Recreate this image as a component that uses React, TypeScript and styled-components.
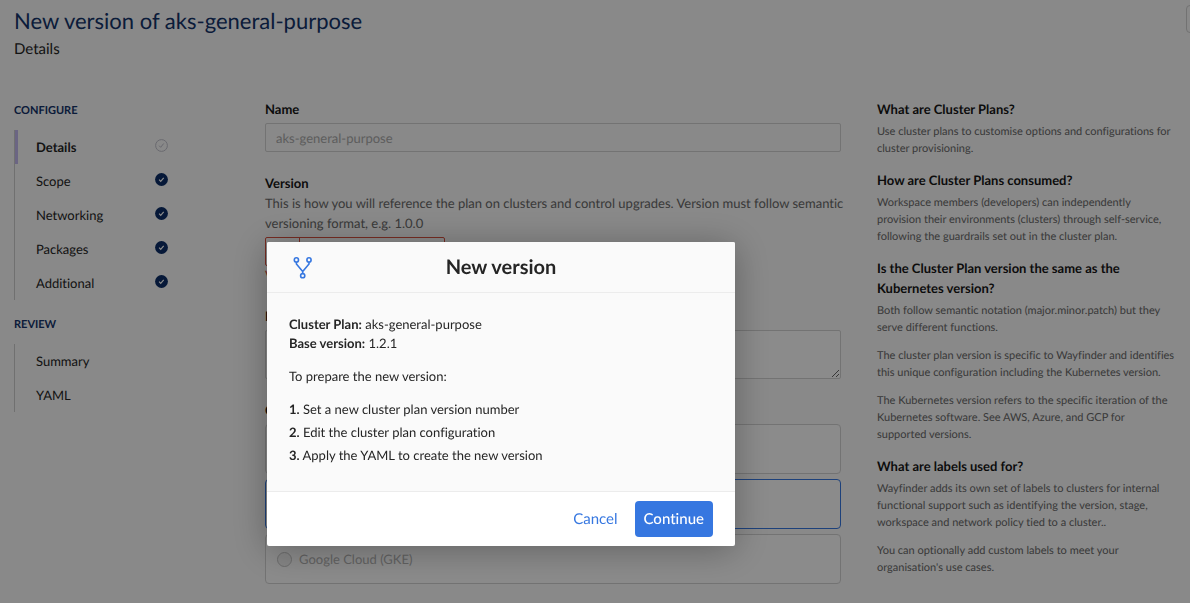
import React from "react";
import styled, { createGlobalStyle, css } from "styled-components";

const GlobalStyle = createGlobalStyle`
  *, *::before, *::after { box-sizing: border-box; }
  body {
    margin: 0;
    background: #f9f9f9;
    color: #252525;
    font-family: Lato, "Open Sans", sans-serif;
    font-size: 13px;
    line-height: 20px;
    text-rendering: geometricPrecision;
    font-variant-ligatures: none;
  }
  h1, h2, h3, p, ul, ol, fieldset { margin: 0; padding: 0; border: 0; }
  ul, ol { list-style: none; }
  button, input, textarea { font: inherit; text-rendering: inherit; }
`;

const Page = styled.div`
  min-height: 100vh;
  padding: 5px 25px 19px 14px;
  overflow: hidden;
`;

const Header = styled.header`
  display: flex;
  align-items: flex-start;
  justify-content: space-between;
  height: 94px;
`;

const Title = styled.h1`
  margin-bottom: 1px;
  color: #14346a;
  font-size: 22px;
  font-weight: 400;
  line-height: 32px;
`;

const Subtitle = styled.p`
  font-size: 15px;
  line-height: 22px;
`;

const HeaderAction = styled.button`
  flex: none;
  width: 40px;
  height: 28px;
  margin-right: -61px;
  border: 1px solid #cfcfcf;
  border-radius: 4px;
  background: transparent;
`;

const Columns = styled.div`
  display: grid;
  grid-template-columns: 215px minmax(0, 2fr) minmax(0, 1fr);
  gap: 36px;
  align-items: start;
`;

const Nav = styled.nav`
  display: flex;
  flex-direction: column;
`;

const NavHeading = styled.h2`
  padding: 2px 0 9px;
  color: #14346a;
  font-size: 11px;
  font-weight: 700;
  line-height: 20px;
`;

const NavList = styled.ul`
  margin-bottom: 13px;
  border-left: 1px solid #cdcdcd;
`;

const NavLink = styled.a<{ $active?: boolean }>`
  display: flex;
  align-items: center;
  justify-content: space-between;
  width: 153px;
  height: 34px;
  padding-left: 18px;
  border-left: 3px solid ${(p) => (p.$active ? "#c4b9ee" : "transparent")};
  color: #252525;
  font-weight: ${(p) => (p.$active ? 700 : 400)};
  text-decoration: none;

  svg {
    margin-bottom: 4px;
  }
`;

const Form = styled.form`
  display: flex;
  flex-direction: column;
`;

const Field = styled.div`
  display: flex;
  flex-direction: column;
  align-items: flex-start;
  margin-bottom: 21px;
`;

const labelText = css`
  color: #161616;
  font-size: 13px;
  font-weight: 700;
  line-height: 20px;
`;

const Label = styled.label`
  ${labelText}
`;

const FieldHelp = styled.p`
  margin-right: -12px;
  color: #686868;
`;

const controlBox = css`
  width: 100%;
  border: 1px solid #d2d2d2;
  border-radius: 2px;
  background: transparent;
  outline: none;
`;

const TextInput = styled.input`
  ${controlBox}
  height: 29px;
  margin-top: 4px;
  padding: 0 10px;
  color: #aaaaaa;
`;

const VersionGroup = styled.div`
  display: flex;
  width: 180px;
  height: 29px;
  margin-top: 4px;
  border: 1px solid #d8503f;
  border-radius: 2px;
`;

const VersionPrefix = styled.span`
  width: 34px;
  border-right: 1px solid #d8503f;
`;

const VersionInput = styled.input`
  flex: 1;
  min-width: 0;
  padding: 0 10px;
  border: 0;
  background: transparent;
  outline: none;
`;

const FieldError = styled.p`
  color: #d8503f;
  line-height: 19px;
`;

const TextArea = styled.textarea`
  ${controlBox}
  display: block;
  height: 49px;
  margin-top: 4px;
  background: #fdfdfd;
`;

const CloudGroup = styled.fieldset`
  display: flex;
  flex-direction: column;
  gap: 5px;
`;

const Legend = styled.legend`
  ${labelText}
  padding: 0 0 4px;
`;

const CloudOption = styled.label<{ $selected?: boolean }>`
  display: flex;
  align-items: center;
  gap: 7px;
  height: 50px;
  padding: 0 11px;
  border: 1px solid ${(p) => (p.$selected ? "#3677e0" : "#d2d2d2")};
  border-radius: 4px;
  background: #fdfdfd;
  color: #b2b2b2;
`;

const Radio = styled.input`
  appearance: none;
  width: 15px;
  height: 15px;
  margin: 0;
  border: 1px solid #c3c3c3;
  border-radius: 50%;
  background: #f2f2f2;
`;

const Help = styled.aside`
  display: flex;
  flex-direction: column;
  margin-right: -14px;
`;

const HelpSection = styled.section`
  display: flex;
  flex-direction: column;
  gap: 11px;
  margin-bottom: 13px;
`;

const HelpHeading = styled.h3`
  ${labelText}
  margin-bottom: -7px;
`;

const HelpText = styled.p`
  color: #686868;
  font-size: 11px;
  line-height: 17px;
`;

const Overlay = styled.div`
  position: fixed;
  inset: 0;
  padding: 242px 0 0 267px;
  background: rgba(0, 0, 0, 0.45);
`;

const Dialog = styled.div`
  width: 468px;
  overflow: visible;
  border-radius: 2px;
  background: #ffffff;
  box-shadow: 0 4px 36px rgba(0, 0, 0, 0.3);
`;

const DialogHeader = styled.header`
  display: grid;
  grid-template-columns: 24px 1fr 24px;
  align-items: center;
  height: 51px;
  padding: 0 24px;
  border-bottom: 1px solid #ececec;
  border-radius: 2px 2px 0 0;
  background: #fafafa;
`;

const DialogTitle = styled.h2`
  font-size: 20px;
  font-weight: 700;
  line-height: 28px;
  text-align: center;
`;

const DialogBody = styled.div`
  display: flex;
  flex-direction: column;
  gap: 14px;
  padding: 22px 22px 26px;
  border-bottom: 1px solid #ececec;
  background: #fafafa;
  line-height: 19px;
`;

const Steps = styled.ol`
  display: flex;
  flex-direction: column;
  gap: 4px;
`;

const DialogFooter = styled.footer`
  display: flex;
  justify-content: flex-end;
  gap: 8px;
  padding: 9px 22px;
`;

const DialogButton = styled.button<{ $primary?: boolean }>`
  height: 36px;
  padding: 0 9px;
  border: 0;
  border-radius: 4px;
  background: ${(p) => (p.$primary ? "#3677e0" : "transparent")};
  color: ${(p) => (p.$primary ? "#ffffff" : "#3677e0")};
  font-size: 15px;
  font-weight: ${(p) => (p.$primary ? 500 : 400)};
`;

function DoneIcon() {
  return (
    <svg width="13" height="13" viewBox="0 0 13 13" aria-hidden="true">
      <circle cx="6.5" cy="6.5" r="6.4" fill="#0b2d66" />
      <path d="M4.1 6.7l1.6 1.6 3-3.4" fill="none" stroke="#fff" strokeWidth="1.2" />
    </svg>
  );
}

function PendingIcon() {
  return (
    <svg width="13" height="13" viewBox="0 0 13 13" aria-hidden="true">
      <circle cx="6.5" cy="6.5" r="5.9" fill="none" stroke="#c0c0cb" />
      <path d="M4.1 6.7l1.6 1.6 3-3.8" fill="none" stroke="#c0c0cb" />
    </svg>
  );
}

function ForkIcon() {
  return (
    <svg width="24" height="24" viewBox="0 0 24 24" fill="none" stroke="#3677e0" strokeWidth="1.6" aria-hidden="true">
      <circle cx="5.4" cy="4.9" r="2.1" />
      <circle cx="18" cy="4.9" r="2.1" />
      <circle cx="11.7" cy="20.7" r="2.1" />
      <path d="M5.4 7v2l6.3 7.4L18 9V7M11.7 16.2v2.4" />
    </svg>
  );
}

type NavEntry = { name: string; state?: "pending" | "done"; active?: boolean };

const configure: NavEntry[] = [
  { name: "Details", state: "pending", active: true },
  { name: "Scope", state: "done" },
  { name: "Networking", state: "done" },
  { name: "Packages", state: "done" },
  { name: "Additional", state: "done" },
];

const review: NavEntry[] = [{ name: "Summary" }, { name: "YAML" }];

const helpTopics = [
  {
    title: "What are Cluster Plans?",
    text: ["Use cluster plans to customise options and configurations for cluster provisioning."],
  },
  {
    title: "How are Cluster Plans consumed?",
    text: [
      "Workspace members (developers) can independently provision\u00a0their environments (clusters) through self-service, following\u00a0the guardrails set out in the cluster plan.",
    ],
  },
  {
    title: "Is the Cluster Plan version the same as the Kubernetes version?",
    text: [
      "Both follow semantic notation (major.minor.patch) but they serve different functions.",
      "The cluster plan version is specific to Wayfinder and identifies this unique configuration including the Kubernetes version.",
      "The Kubernetes version refers to the specific iteration of the Kubernetes software. See AWS, Azure, and GCP for supported\u00a0versions.",
    ],
  },
  {
    title: "What are labels used for?",
    text: [
      "Wayfinder adds its own set of labels to clusters for internal functional support such as identifying the version, stage, workspace and network policy tied to a cluster..",
      "You can optionally add custom labels to meet your organisation's use cases.",
    ],
  },
];

function NavGroup({ title, entries }: { title: string; entries: NavEntry[] }) {
  return (
    <>
      <NavHeading>{title}</NavHeading>
      <NavList>
        {entries.map((entry) => (
          <li key={entry.name}>
            <NavLink href="#" $active={entry.active} aria-current={entry.active ? "step" : undefined}>
              {entry.name}
              {entry.state === "done" && <DoneIcon />}
              {entry.state === "pending" && <PendingIcon />}
            </NavLink>
          </li>
        ))}
      </NavList>
    </>
  );
}

export default function App() {
  return (
    <>
      <GlobalStyle />
      <Page>
        <Header>
          <div>
            <Title>New version of aks-general-purpose</Title>
            <Subtitle>Details</Subtitle>
          </div>
          <HeaderAction type="button" aria-label="More actions" />
        </Header>
        <Columns>
          <Nav>
            <NavGroup title="CONFIGURE" entries={configure} />
            <NavGroup title="REVIEW" entries={review} />
          </Nav>
          <Form>
            <Field>
              <Label htmlFor="name">Name</Label>
              <TextInput id="name" value="aks-general-purpose" disabled readOnly />
            </Field>
            <Field>
              <Label htmlFor="version">Version</Label>
              <FieldHelp>
                This is how you will reference the plan on clusters and control upgrades. Version must follow
                semantic versioning format, e.g. 1.0.0
              </FieldHelp>
              <VersionGroup>
                <VersionPrefix />
                <VersionInput id="version" />
              </VersionGroup>
              <FieldError>Version is required</FieldError>
            </Field>
            <Field>
              <Label htmlFor="description">Description</Label>
              <TextArea id="description" />
            </Field>
            <CloudGroup>
              <Legend>Cloud</Legend>
              <CloudOption>
                <Radio type="radio" name="cloud" aria-label="Amazon Web Services (EKS)" disabled />
              </CloudOption>
              <CloudOption $selected>
                <Radio type="radio" name="cloud" aria-label="Microsoft Azure (AKS)" defaultChecked />
              </CloudOption>
              <CloudOption>
                <Radio type="radio" name="cloud" disabled />
                Google Cloud (GKE)
              </CloudOption>
            </CloudGroup>
          </Form>
          <Help>
            {helpTopics.map((topic) => (
              <HelpSection key={topic.title}>
                <HelpHeading>{topic.title}</HelpHeading>
                {topic.text.map((line) => (
                  <HelpText key={line}>{line}</HelpText>
                ))}
              </HelpSection>
            ))}
          </Help>
        </Columns>
      </Page>
      <Overlay>
        <Dialog role="dialog" aria-modal="true" aria-labelledby="dialog-title">
          <DialogHeader>
            <ForkIcon />
            <DialogTitle id="dialog-title">New version</DialogTitle>
          </DialogHeader>
          <DialogBody>
            <div>
              <p>
                <strong>Cluster Plan:</strong> aks-general-purpose
              </p>
              <p>
                <strong>Base version:</strong> 1.2.1
              </p>
            </div>
            <p>To prepare the new version:</p>
            <Steps>
              <li>
                <strong>1.</strong> Set a new cluster plan version number
              </li>
              <li>
                <strong>2.</strong> Edit the cluster plan configuration
              </li>
              <li>
                <strong>3.</strong> Apply the YAML to create the new version
              </li>
            </Steps>
          </DialogBody>
          <DialogFooter>
            <DialogButton type="button">Cancel</DialogButton>
            <DialogButton type="button" $primary>
              Continue
            </DialogButton>
          </DialogFooter>
        </Dialog>
      </Overlay>
    </>
  );
}
